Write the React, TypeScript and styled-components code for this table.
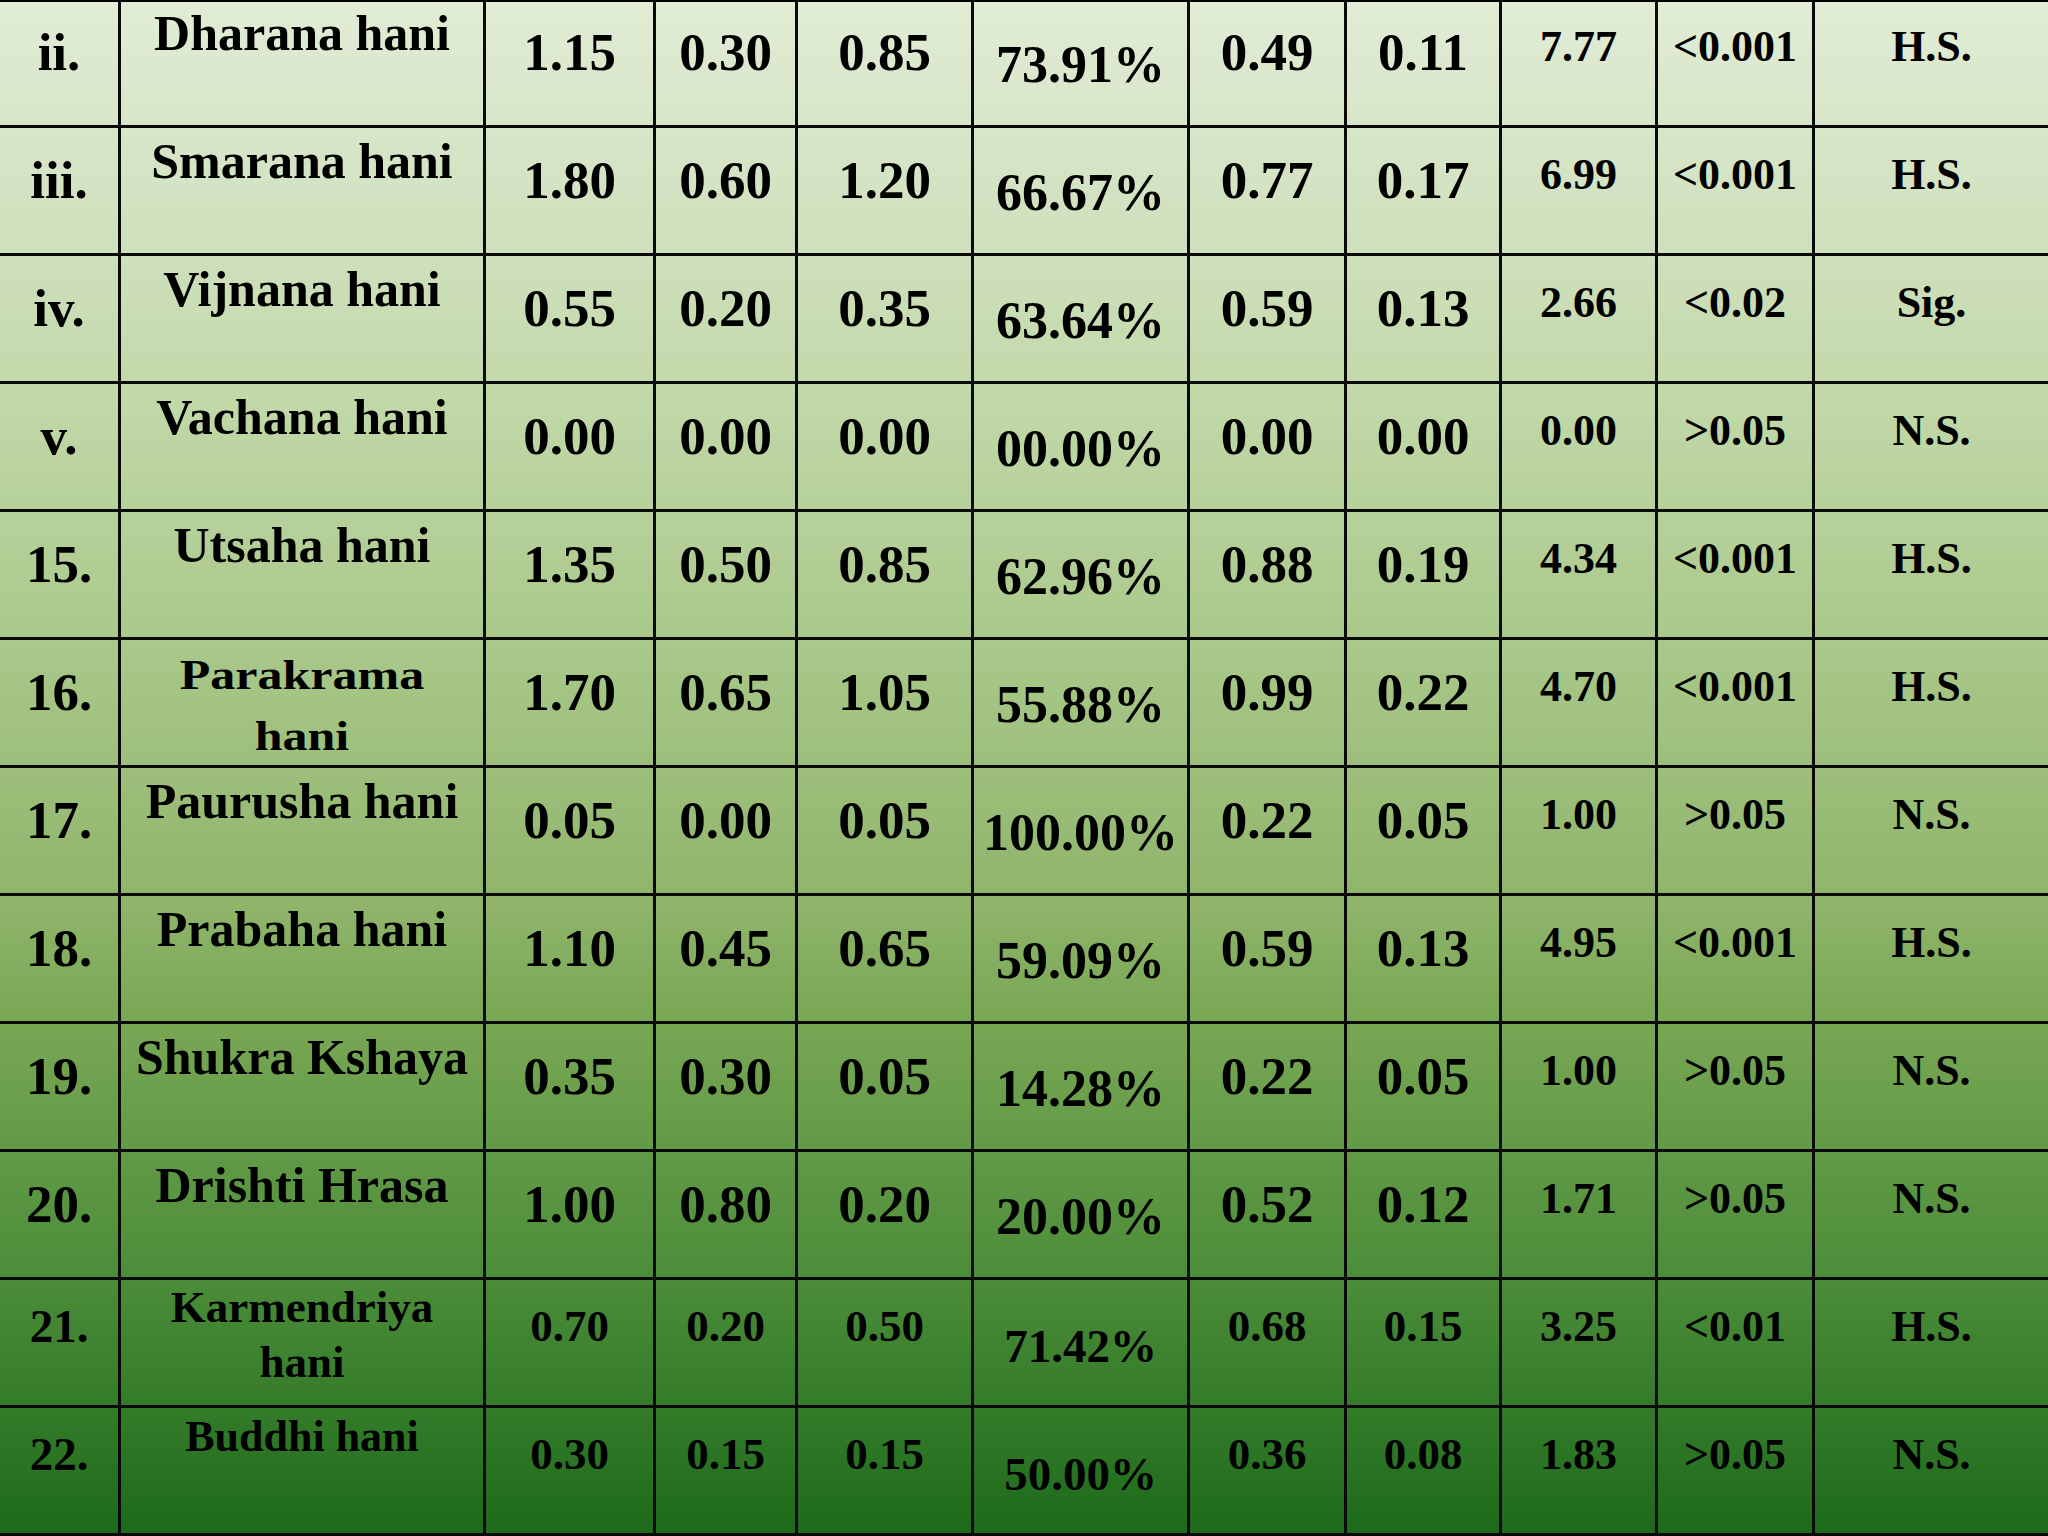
import React from "react";
import styled, { createGlobalStyle, css } from "styled-components";

interface IRow {
  no: string;
  name: string;
  bt: string;
  at: string;
  diff: string;
  relief: string;
  sd: string;
  se: string;
  t: string;
  p: string;
  result: string;
  squeezed?: boolean;
}

const rows: IRow[] = [
  { no: "ii.", name: "Dharana hani", bt: "1.15", at: "0.30", diff: "0.85", relief: "73.91%", sd: "0.49", se: "0.11", t: "7.77", p: "<0.001", result: "H.S." },
  { no: "iii.", name: "Smarana hani", bt: "1.80", at: "0.60", diff: "1.20", relief: "66.67%", sd: "0.77", se: "0.17", t: "6.99", p: "<0.001", result: "H.S." },
  { no: "iv.", name: "Vijnana hani", bt: "0.55", at: "0.20", diff: "0.35", relief: "63.64%", sd: "0.59", se: "0.13", t: "2.66", p: "<0.02", result: "Sig." },
  { no: "v.", name: "Vachana hani", bt: "0.00", at: "0.00", diff: "0.00", relief: "00.00%", sd: "0.00", se: "0.00", t: "0.00", p: ">0.05", result: "N.S." },
  { no: "15.", name: "Utsaha hani", bt: "1.35", at: "0.50", diff: "0.85", relief: "62.96%", sd: "0.88", se: "0.19", t: "4.34", p: "<0.001", result: "H.S." },
  { no: "16.", name: "Parakrama\nhani", bt: "1.70", at: "0.65", diff: "1.05", relief: "55.88%", sd: "0.99", se: "0.22", t: "4.70", p: "<0.001", result: "H.S.", squeezed: true },
  { no: "17.", name: "Paurusha hani", bt: "0.05", at: "0.00", diff: "0.05", relief: "100.00%", sd: "0.22", se: "0.05", t: "1.00", p: ">0.05", result: "N.S." },
  { no: "18.", name: "Prabaha hani", bt: "1.10", at: "0.45", diff: "0.65", relief: "59.09%", sd: "0.59", se: "0.13", t: "4.95", p: "<0.001", result: "H.S." },
  { no: "19.", name: "Shukra Kshaya", bt: "0.35", at: "0.30", diff: "0.05", relief: "14.28%", sd: "0.22", se: "0.05", t: "1.00", p: ">0.05", result: "N.S." },
  { no: "20.", name: "Drishti Hrasa", bt: "1.00", at: "0.80", diff: "0.20", relief: "20.00%", sd: "0.52", se: "0.12", t: "1.71", p: ">0.05", result: "N.S." },
  { no: "21.", name: "Karmendriya\nhani", bt: "0.70", at: "0.20", diff: "0.50", relief: "71.42%", sd: "0.68", se: "0.15", t: "3.25", p: "<0.01", result: "H.S." },
  { no: "22.", name: "Buddhi hani", bt: "0.30", at: "0.15", diff: "0.15", relief: "50.00%", sd: "0.36", se: "0.08", t: "1.83", p: ">0.05", result: "N.S." },
];

// the last two rows of the slide are set a little smaller
const COMPACT_FROM = 10;

const GlobalStyle = createGlobalStyle`
  html, body {
    margin: 0;
    padding: 0;
    overflow: hidden;
    background: #1c6a1a;
  }
`;

const Sheet = styled.div`
  display: grid;
  grid-template-columns: 121px 365px 170px 142px 176px 216px 157px 155px 156px 157px 233px;
  grid-auto-rows: 128px;
  width: 2048px;
  height: 1536px;
  box-shadow: inset 0 2px 0 #000;
  background: linear-gradient(
    to bottom,
    #e1ecd5 0%,
    #cfe0bd 16%,
    #c3d9aa 25%,
    #a9c88a 42%,
    #8fb46a 59%,
    #7aa855 66%,
    #4c8d39 83%,
    #1c6a1a 100%
  );
  font-family: "Liberation Serif", "Times New Roman", serif;
  font-weight: 700;
  color: #000;
`;

const cellBase = css`
  box-sizing: border-box;
  border-right: 3px solid #0a0a0a;
  border-bottom: 3px solid #0a0a0a;
  text-align: center;
  white-space: nowrap;
  overflow: hidden;
  line-height: 1;
`;

type CellProps = { $compact?: boolean };

const SerialCell = styled.div<CellProps>`
  ${cellBase}
  font-size: ${(p) => (p.$compact ? "47px" : "53px")};
  padding-top: ${(p) => (p.$compact ? "23px" : "26px")};
`;

const NameCell = styled.div<CellProps & { $wrapped?: boolean }>`
  ${cellBase}
  white-space: pre-line;
  font-size: 50px;
  padding-top: 8px;

  ${(p) =>
    p.$compact &&
    css`
      font-size: ${p.$wrapped ? "45px" : "44px"};
      line-height: ${p.$wrapped ? "55px" : 1};
      padding-top: ${p.$wrapped ? "0px" : "7px"};
    `}
`;

// Parakrama hani is squashed vertically on the slide to fit two lines
const SqueezedName = styled.span`
  display: inline-block;
  font-size: 50px;
  line-height: 71px;
  margin-top: -3px;
  transform: scaleY(0.85);
  transform-origin: top center;
`;

const ValueCell = styled.div<CellProps>`
  ${cellBase}
  font-size: ${(p) => (p.$compact ? "45px" : "53px")};
  padding-top: ${(p) => (p.$compact ? "24px" : "26px")};
`;

const PercentCell = styled.div<CellProps>`
  ${cellBase}
  font-size: ${(p) => (p.$compact ? "47px" : "52px")};
  padding-top: ${(p) => (p.$compact ? "43px" : "39px")};
`;

const StatCell = styled.div`
  ${cellBase}
  font-size: 44px;
  padding-top: 25px;
`;

const ResultCell = styled(StatCell)`
  border-right: none;
`;

const App = () => (
  <>
    <GlobalStyle />
    <Sheet>
      {rows.map((r, i) => {
        const compact = i >= COMPACT_FROM;
        return (
          <React.Fragment key={r.no}>
            <SerialCell $compact={compact}>{r.no}</SerialCell>
            <NameCell $compact={compact} $wrapped={r.name.includes("\n")}>
              {r.squeezed ? <SqueezedName>{r.name}</SqueezedName> : r.name}
            </NameCell>
            <ValueCell $compact={compact}>{r.bt}</ValueCell>
            <ValueCell $compact={compact}>{r.at}</ValueCell>
            <ValueCell $compact={compact}>{r.diff}</ValueCell>
            <PercentCell $compact={compact}>{r.relief}</PercentCell>
            <ValueCell $compact={compact}>{r.sd}</ValueCell>
            <ValueCell $compact={compact}>{r.se}</ValueCell>
            <StatCell>{r.t}</StatCell>
            <StatCell>{r.p}</StatCell>
            <ResultCell>{r.result}</ResultCell>
          </React.Fragment>
        );
      })}
    </Sheet>
  </>
);

export default App;
